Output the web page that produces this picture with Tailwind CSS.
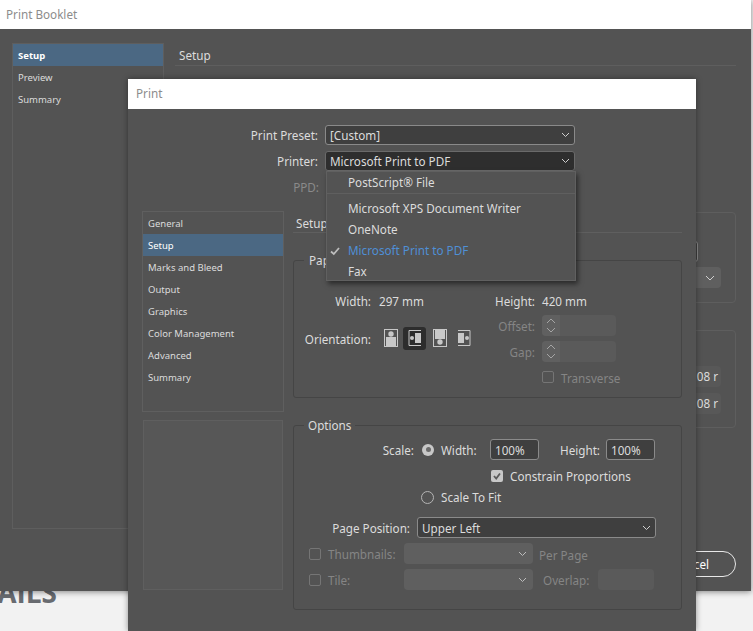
<!DOCTYPE html>
<html lang="en">
<head>
    <meta charset="UTF-8">
    <title>Print</title>
    <script src="https://cdn.jsdelivr.net/npm/@tailwindcss/browser@4"></script>
</head>
<body class="relative w-[753px] h-[631px] overflow-hidden bg-[#f2f2f2] font-['Noto_Sans',sans-serif] text-[11.7px] text-[#dcdcdc]">

    <!-- page behind the dialogs -->
    <div class="absolute right-[696px] top-[575px] whitespace-nowrap text-[28px] leading-[34px] font-bold text-[#686b70] font-['Open_Sans',sans-serif]">DETAILS</div>

    <!-- Print Booklet window -->
    <div class="absolute left-0 top-0 w-[751px] h-[591px] flex flex-col bg-[#535353] shadow-[0_1px_6px_rgba(0,0,0,0.45)]">
        <div class="h-[29px] shrink-0 bg-white pl-[6px] leading-[28px] text-[#8c8c8c]">Print Booklet</div>
        <div class="flex pl-[12px] pt-[14px]">
            <div class="w-[152px] h-[486px] border border-[#5e5e5e] text-[9.5px]">
                <div class="h-[22px] bg-[#4b6883] pl-[5px] font-bold leading-[24px] text-white">Setup</div>
                <div class="h-[22px] pl-[5px] leading-[24px]">Preview</div>
                <div class="h-[22px] pl-[5px] leading-[24px]">Summary</div>
            </div>
            <div class="w-[561px] ml-[11px] flex flex-col items-end">
                <div class="w-full h-[23px] pl-[4px] border-b border-[#5e5e5e] leading-[24px]">Setup</div>
                <div class="w-[200px] h-[91px] mt-[146px] flex flex-col items-end border border-[#5e5e5e] rounded-sm pr-[14px] pt-[28px]">
                    <div class="w-[40px] h-[21px] mr-[23px] border border-[#8a8a8a] rounded-[3px] bg-[#3f3f3f]"></div>
                    <div class="w-[40px] h-[21px] mt-[5px] flex items-center justify-end pr-[6px] rounded-sm bg-[#5f5f5f]">
                        <svg class="w-[10px] h-[6px]" viewBox="0 0 10 6"><path d="M1 1l4 4 4-4" fill="none" stroke="#d0d0d0"/></svg>
                    </div>
                </div>
                <div class="w-[200px] h-[98px] mt-[27px] flex flex-col items-end gap-[6px] border border-[#5e5e5e] rounded-sm pr-[14px] pt-[35px]">
                    <div class="w-[40px] h-[21px] pr-[3px] text-right leading-[21px] rounded-sm bg-[#585858]">08 r</div>
                    <div class="w-[40px] h-[21px] pr-[3px] text-right leading-[21px] rounded-sm bg-[#585858]">08 r</div>
                </div>
                <div class="w-[100px] h-[26px] mt-[123px] pr-[26px] text-right leading-[24px] text-white border border-[#e8e8e8] rounded-full">Cancel</div>
            </div>
        </div>
    </div>

    <!-- Print dialog -->
    <div class="absolute left-[128px] top-[79px] w-[568px] h-[552px] bg-[#535353] shadow-[0_0_6px_rgba(0,0,0,0.4)]">
        <div class="h-[30px] bg-white pl-[8px] leading-[29px] text-[#8c8c8c]">Print</div>

        <div class="h-[102px] pt-[16px]">
            <div class="flex items-center h-[20px]">
                <div class="w-[190px] pt-[2px] text-right">Print Preset:</div>
                <div class="w-[250px] h-[20px] ml-[7px] flex items-center justify-between pl-[4px] pr-[4px] border border-[#8a8a8a] rounded-[3px] bg-[#3f3f3f]">
                    <span class="pt-[2px]">[Custom]</span>
                    <svg class="w-[9px] h-[6px]" viewBox="0 0 9 6"><path d="M1 1l3.500 3.500L8 1" fill="none" stroke="#cfcfcf"/></svg>
                </div>
            </div>
            <div class="flex items-center h-[20px] mt-[6px]">
                <div class="w-[190px] pt-[2px] text-right">Printer:</div>
                <div class="w-[250px] h-[20px] ml-[7px] flex items-center justify-between pl-[4px] pr-[4px] border border-[#6a6a6a] rounded-[3px] bg-[#2e2e2e]">
                    <span class="pt-[2px]">Microsoft Print to PDF</span>
                    <svg class="w-[9px] h-[6px]" viewBox="0 0 9 6"><path d="M1 1l3.500 3.500L8 1" fill="none" stroke="#cfcfcf"/></svg>
                </div>
            </div>
            <div class="h-[20px] mt-[6px] w-[191px] text-right leading-[20px] text-[#8a8a8a]">PPD:</div>
        </div>

        <div class="flex pl-[14px]">
            <!-- section list and preview -->
            <div class="w-[142px] shrink-0">
                <div class="h-[201px] border border-[#5f5f5f] text-[9.5px]">
                    <div class="h-[22px] pl-[5px] leading-[24px]">General</div>
                    <div class="h-[22px] pl-[5px] leading-[24px] bg-[#4b6883] text-white">Setup</div>
                    <div class="h-[22px] pl-[5px] leading-[24px]">Marks and Bleed</div>
                    <div class="h-[22px] pl-[5px] leading-[24px]">Output</div>
                    <div class="h-[22px] pl-[5px] leading-[24px]">Graphics</div>
                    <div class="h-[22px] pl-[5px] leading-[24px]">Color Management</div>
                    <div class="h-[22px] pl-[5px] leading-[24px]">Advanced</div>
                    <div class="h-[22px] pl-[5px] leading-[24px]">Summary</div>
                </div>
                <div class="w-[140px] h-[170px] mt-[8px] ml-px border border-[#5f5f5f] bg-[#575757]"></div>
            </div>

            <!-- setup panel -->
            <div class="w-[389px] ml-[9px]">
                <div class="h-[22px] pl-[3px] leading-[24px] border-b border-[#5f5f5f]">Setup</div>

                <fieldset class="h-[146px] mt-[19px] border border-[#454545] rounded-[3px]">
                    <legend class="ml-[10px] px-[5px] leading-[16px]">Paper</legend>
                    <div class="flex">
                        <div class="w-[200px]">
                            <div class="flex h-[20px] mt-[24px]">
                                <div class="w-[77px] text-right leading-[18px]">Width:</div>
                                <div class="ml-[8px] leading-[18px]">297 mm</div>
                            </div>
                            <div class="flex items-center h-[24px] mt-[14px]">
                                <div class="w-[77px] pt-[4px] text-right">Orientation:</div>
                                <div class="flex items-center ml-[12px]">
                                    <svg class="w-[16px] h-[18px]" viewBox="0 0 16 18">
                                        <rect x="1.500" y="0.500" width="13" height="17" fill="none" stroke="#c8c8c8"/>
                                        <circle cx="8" cy="5" r="2.700" fill="#c8c8c8"/>
                                        <rect x="3" y="8" width="10" height="10" fill="#c8c8c8"/>
                                    </svg>
                                    <div class="w-[23px] h-[23px] ml-[4px] flex items-center justify-center rounded-[3px] bg-[#2d2d2d]">
                                        <svg class="w-[16px] h-[18px]" viewBox="0 0 16 18">
                                            <path d="M14 1.500H2v15h12" fill="none" stroke="#c8c8c8"/>
                                            <circle cx="5" cy="9" r="2" fill="#c8c8c8"/>
                                            <rect x="8" y="4" width="6" height="10" fill="#c8c8c8"/>
                                        </svg>
                                    </div>
                                    <svg class="w-[16px] h-[18px] ml-[6px]" viewBox="0 0 16 18">
                                        <rect x="1.500" y="0.500" width="13" height="17" fill="none" stroke="#c8c8c8"/>
                                        <rect x="3" y="0" width="10" height="10" fill="#c8c8c8"/>
                                        <circle cx="8" cy="13" r="2.700" fill="#c8c8c8"/>
                                    </svg>
                                    <svg class="w-[16px] h-[18px] ml-[8px]" viewBox="0 0 16 18">
                                        <path d="M2 1.500h12v15H2" fill="none" stroke="#c8c8c8"/>
                                        <rect x="2" y="4" width="6" height="10" fill="#c8c8c8"/>
                                        <circle cx="11" cy="9" r="2" fill="#c8c8c8"/>
                                    </svg>
                                </div>
                            </div>
                        </div>
                        <div class="w-[186px]">
                            <div class="flex h-[20px] mt-[24px]">
                                <div class="w-[41px] text-right leading-[18px]">Height:</div>
                                <div class="ml-[7px] leading-[18px]">420 mm</div>
                            </div>
                            <div class="flex items-center h-[21px] mt-[3px] text-[#858585]">
                                <div class="w-[41px] pt-[2px] text-right">Offset:</div>
                                <div class="w-[74px] h-[21px] ml-[7px] flex rounded-sm bg-[#5a5a5a]">
                                    <svg class="w-[18px] h-[21px] bg-[#606060] rounded-l-sm" viewBox="0 0 18 21"><path d="M5 8l4-4 4 4M5 13l4 4 4-4" fill="none" stroke="#a5a5a5"/></svg>
                                </div>
                            </div>
                            <div class="flex items-center h-[21px] mt-[5px] text-[#858585]">
                                <div class="w-[41px] pt-[2px] text-right">Gap:</div>
                                <div class="w-[74px] h-[21px] ml-[7px] flex rounded-sm bg-[#5a5a5a]">
                                    <svg class="w-[18px] h-[21px] bg-[#606060] rounded-l-sm" viewBox="0 0 18 21"><path d="M5 8l4-4 4 4M5 13l4 4 4-4" fill="none" stroke="#a5a5a5"/></svg>
                                </div>
                            </div>
                            <div class="flex items-center h-[14px] mt-[8px] pl-[48px] text-[#858585]">
                                <div class="w-[12px] h-[12px] border border-[#757575] rounded-[2px]"></div>
                                <div class="ml-[7px] pt-[4px]">Transverse</div>
                            </div>
                        </div>
                    </div>
                </fieldset>

                <fieldset class="h-[193px] mt-[19px] border border-[#454545] rounded-[3px]">
                    <legend class="ml-[10px] px-[4px] leading-[16px]">Options</legend>
                    <div class="flex items-center h-[21px] mt-[6px]">
                        <div class="w-[120px] pt-[3px] text-right">Scale:</div>
                        <div class="w-[12px] h-[12px] ml-[8px] flex items-center justify-center rounded-full bg-[#c8c8c8]">
                            <div class="w-[5px] h-[5px] rounded-full bg-[#6a6a6a]"></div>
                        </div>
                        <div class="ml-[7px] w-[49px] pt-[3px]">Width:</div>
                        <div class="w-[49px] h-[21px] pl-[4px] leading-[20px] border border-[#8a8a8a] rounded-[3px] bg-[#3f3f3f]">100%</div>
                        <div class="w-[67px] pr-[6px] pt-[3px] text-right">Height:</div>
                        <div class="w-[49px] h-[21px] pl-[4px] leading-[20px] border border-[#8a8a8a] rounded-[3px] bg-[#3f3f3f]">100%</div>
                    </div>
                    <div class="flex items-center h-[16px] mt-[8px] pl-[197px]">
                        <div class="w-[12px] h-[12px] flex items-center justify-center rounded-[2px] bg-[#c8c8c8]">
                            <svg class="w-[10px] h-[10px]" viewBox="0 0 10 10"><path d="M2 5l2.200 2.500L8 2.500" fill="none" stroke="#5a5a5a" stroke-width="1.800"/></svg>
                        </div>
                        <div class="ml-[7px] pt-[2px]">Constrain Proportions</div>
                    </div>
                    <div class="flex items-center h-[16px] mt-[5px] pl-[127px]">
                        <div class="w-[13px] h-[13px] border border-[#b5b5b5] rounded-full"></div>
                        <div class="ml-[7px] pt-[2px]">Scale To Fit</div>
                    </div>
                    <div class="flex items-center h-[21px] mt-[12px]">
                        <div class="w-[116px] pt-[3px] text-right">Page Position:</div>
                        <div class="w-[239px] h-[21px] ml-[7px] flex items-center justify-between px-[4px] border border-[#8a8a8a] rounded-[3px] bg-[#3f3f3f]">
                            <span class="pt-[3px]">Upper Left</span>
                            <svg class="w-[9px] h-[6px]" viewBox="0 0 9 6"><path d="M1 1l3.500 3.500L8 1" fill="none" stroke="#cfcfcf"/></svg>
                        </div>
                    </div>
                    <div class="flex items-center h-[21px] mt-[5px] pl-[15px] text-[#858585]">
                        <div class="w-[12px] h-[12px] border border-[#757575] rounded-[2px]"></div>
                        <div class="w-[76px] ml-[7px] pt-[2px]">Thumbnails:</div>
                        <div class="w-[129px] h-[21px] flex items-center justify-end pr-[6px] rounded-sm bg-[#5f5f5f]">
                            <svg class="w-[9px] h-[6px]" viewBox="0 0 9 6"><path d="M1 1l3.500 3.500L8 1" fill="none" stroke="#bdbdbd"/></svg>
                        </div>
                        <div class="ml-[6px] pt-[4px]">Per Page</div>
                    </div>
                    <div class="flex items-center h-[21px] mt-[5px] pl-[15px] text-[#858585]">
                        <div class="w-[12px] h-[12px] border border-[#757575] rounded-[2px]"></div>
                        <div class="w-[76px] ml-[7px] pt-[2px]">Tile:</div>
                        <div class="w-[129px] h-[21px] flex items-center justify-end pr-[6px] rounded-sm bg-[#5f5f5f]">
                            <svg class="w-[9px] h-[6px]" viewBox="0 0 9 6"><path d="M1 1l3.500 3.500L8 1" fill="none" stroke="#bdbdbd"/></svg>
                        </div>
                        <div class="w-[47px] ml-[10px] pt-[2px]">Overlap:</div>
                        <div class="w-[56px] h-[21px] ml-[8px] rounded-sm bg-[#5a5a5a]"></div>
                    </div>
                </fieldset>
            </div>
        </div>
    </div>

    <!-- open Printer menu -->
    <div class="absolute left-[326px] top-[171px] w-[250px] h-[110px] border border-[#606060] bg-[#535353] shadow-[2px_3px_5px_rgba(0,0,0,0.5)]">
        <div class="h-[22px] pl-[21px] leading-[20px] border-b border-[#5f5f5f]">PostScript® File</div>
        <div class="h-[21px] mt-[4px] pl-[21px] leading-[21px]">Microsoft XPS Document Writer</div>
        <div class="h-[21px] pl-[21px] leading-[21px]">OneNote</div>
        <div class="flex items-center h-[21px] pl-[3px] text-[#4f8fd6]">
            <svg class="w-[10px] h-[10px]" viewBox="0 0 10 10"><path d="M1 5.500l2.800 2.500L9 2" fill="none" stroke="#bdbdbd" stroke-width="1.800"/></svg>
            <span class="ml-[8px]">Microsoft Print to PDF</span>
        </div>
        <div class="h-[21px] pl-[21px] leading-[21px]">Fax</div>
    </div>

</body>
</html>
